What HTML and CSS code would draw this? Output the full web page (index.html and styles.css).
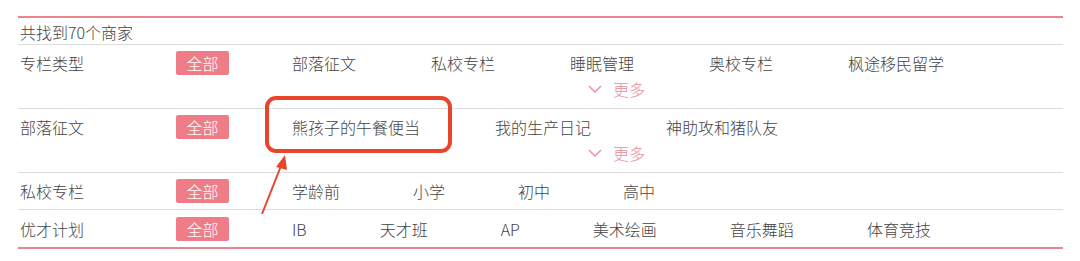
FILE: index.html
```html
<!DOCTYPE html>
<html lang="zh-CN">
<head>
    <meta charset="UTF-8">
    <title>商家筛选</title>
    <link rel="stylesheet" href="styles.css">
</head>
<body>

    <div class="filter">
        <div class="total">共找到70个商家</div>

        <div class="row">
            <div class="label">专栏类型</div>
            <span class="all">全部</span>
            <div class="opts">
                <div class="items">
                    <span>部落征文</span>
                    <span>私校专栏</span>
                    <span>睡眠管理</span>
                    <span>奥校专栏</span>
                    <span>枫途移民留学</span>
                </div>
                <div class="more">
                    <svg width="14" height="8" viewBox="0 0 14 8"><polyline points="1,1 7,7 13,1" fill="none" stroke="#e98ca0" stroke-width="1.4"/></svg>
                    <span>更多</span>
                </div>
            </div>
        </div>

        <div class="row">
            <div class="label">部落征文</div>
            <span class="all">全部</span>
            <div class="opts">
                <div class="items">
                    <span>熊孩子的午餐便当</span>
                    <span>我的生产日记</span>
                    <span>神助攻和猪队友</span>
                </div>
                <div class="more">
                    <svg width="14" height="8" viewBox="0 0 14 8"><polyline points="1,1 7,7 13,1" fill="none" stroke="#e98ca0" stroke-width="1.4"/></svg>
                    <span>更多</span>
                </div>
            </div>
        </div>

        <div class="row">
            <div class="label">私校专栏</div>
            <span class="all">全部</span>
            <div class="opts">
                <div class="items short">
                    <span>学龄前</span>
                    <span>小学</span>
                    <span>初中</span>
                    <span>高中</span>
                </div>
            </div>
        </div>

        <div class="row last">
            <div class="label">优才计划</div>
            <span class="all">全部</span>
            <div class="opts">
                <div class="items short">
                    <span>IB</span>
                    <span>天才班</span>
                    <span>AP</span>
                    <span>美术绘画</span>
                    <span>音乐舞蹈</span>
                    <span>体育竞技</span>
                </div>
            </div>
        </div>
    </div>

    <!-- 标注：红框和箭头 -->
    <svg class="mark" width="1080" height="261" viewBox="0 0 1080 261">
        <rect x="267" y="98" width="183" height="53" rx="9" fill="none" stroke="#e8462c" stroke-width="4"/>
        <line x1="262" y1="214" x2="281" y2="166" stroke="#e8462c" stroke-width="2"/>
        <polygon points="285,155 276,167 287,170" fill="#e8462c"/>
    </svg>

</body>
</html>
```

FILE: styles.css
```css
body {
    margin: 0;
    background-color: #fff;
    font-family: "Noto Sans CJK SC", "Liberation Sans", sans-serif;
    font-size: 16px;
    font-weight: 300;
    color: #444;
    position: relative;
}
.filter {
    margin: 16px 0 0 18px;
    width: 1045px;
    border-top: 2px solid #e8868f;
    border-bottom: 2px solid #e8868f;
}
.total {
    padding: 3px 0 0 2px;
    line-height: 22px;
    height: 23px;
    border-bottom: 1px solid #dcdcdc;
}
.row {
    display: flex;
    align-items: flex-start;
    padding: 6px 0 7px 2px;
    border-bottom: 1px solid #dcdcdc;
    line-height: 24px;
}
.row.last {
    border-bottom: none;
    padding: 7px 0 6px 2px;
}
.row:nth-child(4) {
    padding-bottom: 6px;
}
.label {
    width: 156px;
    flex-shrink: 0;
}
.all {
    width: 53px;
    height: 24px;
    margin-right: 63px;
    flex-shrink: 0;
    background-color: #ef7d87;
    color: #fff;
    text-align: center;
    border-radius: 2px;
}
.opts {
    flex: 1;
}
.items {
    display: flex;
    gap: 75px;
}
.items.short {
    gap: 73px;
}
.more {
    display: flex;
    align-items: center;
    margin: 2px 0 0 296px;
    color: #e98ca0;
}
.more svg {
    margin-right: 11px;
}
.mark {
    position: absolute;
    top: 0;
    left: 0;
    pointer-events: none;
}
```
